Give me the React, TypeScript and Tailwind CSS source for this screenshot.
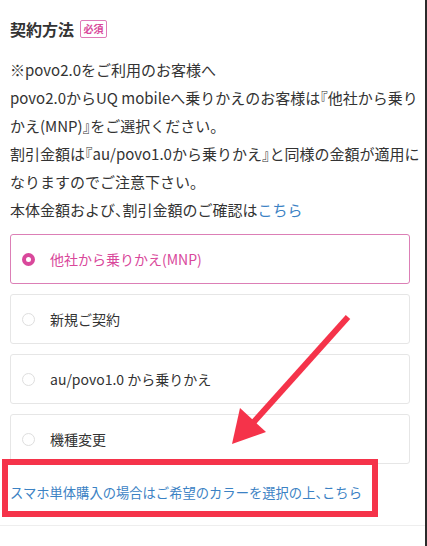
import React from "react";

const options = [
  { label: "他社から乗りかえ(MNP)", selected: true },
  { label: "新規ご契約", selected: false },
  { label: "au/povo1.0 から乗りかえ", selected: false },
  { label: "機種変更", selected: false },
];

const App = () => {
  return (
    <div
      className="relative w-[427px] h-[546px] bg-white border-r-2 border-[#2b2b2b] overflow-hidden text-[#333]"
      style={{ fontFamily: '"Noto Sans CJK JP", "Noto Sans", sans-serif' }}
    >
      <div className="pl-[10px] pr-[10px] pt-[18px] [font-feature-settings:'halt']">
        <div className="flex items-center">
          <h2 className="text-[16px] leading-[22px] font-bold text-[#333]">契約方法</h2>
          <span className="ml-[6px] w-[27px] h-[18px] flex items-center justify-center border border-[#e07ab8] rounded-[2px] text-[10px] font-bold text-[#d9489b] leading-none">
            必須
          </span>
        </div>

        <p className="mt-[16px] -mr-[6px] text-[15px] leading-[28px]">
          ※povo2.0をご利用のお客様へ
          <br />
          povo2.0からUQ mobileへ乗りかえのお客様は『他社から乗りかえ(MNP)』をご選択ください。
          <br />
          割引金額は『au/povo1.0から乗りかえ』と同様の金額が適用になりますのでご注意下さい。
          <br />
          本体金額および、割引金額のご確認は
          <span className="text-[#3b82c4]">こちら</span>
        </p>

        <div className="mt-[10px] mr-[5px] flex flex-col gap-[10px]">
          {options.map((opt) => (
            <label
              key={opt.label}
              className={
                opt.selected
                  ? "h-[50px] flex items-center pl-[11px] border border-[#dc7fb6] rounded-[3px] bg-white"
                  : "h-[50px] flex items-center pl-[11px] border border-[#e6e6e6] rounded-[3px] bg-white"
              }
            >
              {opt.selected ? (
                <span className="w-[13px] h-[13px] rounded-full border-[4px] border-[#d9489b] bg-white" />
              ) : (
                <span className="w-[13px] h-[13px] rounded-full border border-[#dedede] bg-white" />
              )}
              <span
                className={
                  opt.selected
                    ? "ml-[15px] text-[14px] text-[#d9489b]"
                    : "ml-[15px] text-[14px] text-[#333]"
                }
              >
                {opt.label}
              </span>
            </label>
          ))}
        </div>

        <div className="mt-[17px] text-[13.3px] leading-[24px] text-[#3b82c4]">
          スマホ単体購入の場合はご希望のカラーを選択の上、こちら
        </div>
      </div>
      <div className="mt-[20px] border-t border-[#eeeeee]" />

      {/* annotation overlay */}
      <div className="absolute left-[2px] top-[459px] w-[376px] h-[58px] border-[6px] border-[#f5334a]" />
      <svg
        className="absolute left-0 top-0"
        width="427"
        height="546"
        viewBox="0 0 427 546"
      >
        <line x1="348" y1="317" x2="252" y2="424" stroke="#f5334a" strokeWidth="6" />
        <polygon points="232,444 240,408 266,432" fill="#f5334a" />
      </svg>
    </div>
  );
};

export default App;
